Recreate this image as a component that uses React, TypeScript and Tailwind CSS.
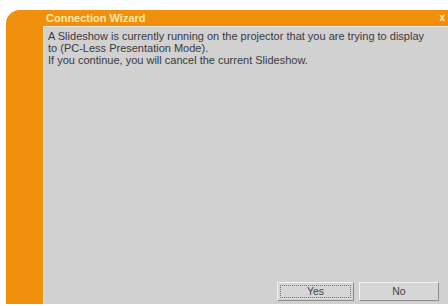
export default function App() {
  return (
    <div className="w-[448px] h-[306px] bg-white pt-[10px] pl-[6px] font-['Liberation_Sans',sans-serif] overflow-hidden">
      <div className="h-[294px] w-[442px] flex bg-[#f0900c] rounded-tl-[14px]">
        <div className="w-[37px] shrink-0" />
        <div className="flex-1 flex flex-col">
          <div className="h-[16px] flex items-center justify-between pl-[3px] pr-[3px]">
            <span className="text-[11px] font-bold text-[#fbe7b0] leading-none">Connection Wizard</span>
            <span className="text-[10px] font-bold text-[#fbe7b0] leading-none">x</span>
          </div>
          <div className="flex-1 bg-[#d1d1d1] border-l border-t border-[#e6e6e6] flex flex-col pl-[4px] pt-[3px] pr-[4px] pb-[3px]">
            <div className="text-[11px] leading-[12px] text-[#3a3a3a]">
              <p>A Slideshow is currently running on the projector that you are trying to display</p>
              <p>to (PC-Less Presentation Mode).</p>
              <p>If you continue, you will cancel the current Slideshow.</p>
            </div>
            <div className="mt-auto flex justify-end gap-[5px] pr-[5px]">
              <button className="w-[77px] h-[19px] bg-[#d6d6d6] border border-[#f2f2f2] border-r-[#8a8a8a] border-b-[#8a8a8a] text-[10.5px] text-[#444] flex items-center justify-center">
                <span className="w-[71px] h-[13px] border border-dotted border-[#777] flex items-center justify-center leading-none">Yes</span>
              </button>
              <button className="w-[80px] h-[19px] bg-[#d6d6d6] border border-[#f2f2f2] border-r-[#8a8a8a] border-b-[#8a8a8a] text-[10.5px] text-[#444] flex items-center justify-center leading-none">
                No
              </button>
            </div>
          </div>
        </div>
      </div>
    </div>
  );
}
